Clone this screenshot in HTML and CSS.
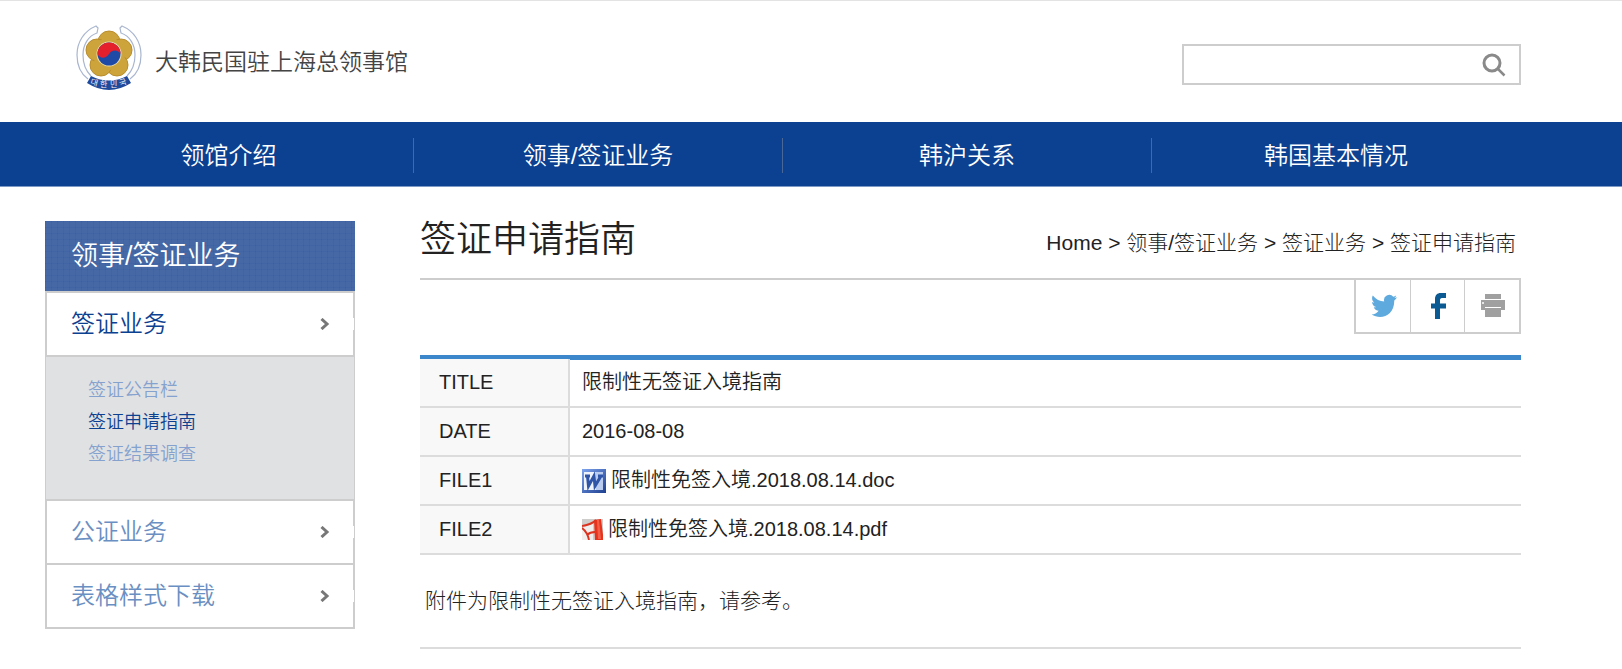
FILE: index.html
```html
<!DOCTYPE html>
<html lang="zh-CN">
<head>
  <meta charset="UTF-8">
  <meta name="viewport" content="width=device-width, initial-scale=1.0">
  <title>签证申请指南</title>
  <link rel="stylesheet" href="styles.css">
</head>
<body>
  <header class="header">
    <a href="#" class="logo">
      <svg class="emblem" viewBox="0 0 66 66" aria-hidden="true">
        <g fill="none" stroke="#a9b6cf" stroke-width="1.2">
          <path d="M12 54C5 49 1 40 1 30 1 17 8 6 20 1l2 2-1 5C12 11 7 20 7 30c0 9 3 16 8 21"/>
          <path d="M54 54c7-5 11-14 11-24C65 17 58 6 46 1l-2 2 1 5c9 3 14 12 14 22 0 9-3 16-8 21"/>
        </g>
        <g fill="#cda43c" stroke="#b98d2c" stroke-width="1">
          <circle cx="33" cy="17" r="11"/>
          <circle cx="45" cy="25" r="11"/>
          <circle cx="41" cy="40" r="11"/>
          <circle cx="25" cy="40" r="11"/>
          <circle cx="21" cy="25" r="11"/>
        </g>
        <circle cx="33" cy="29" r="16" fill="#cda43c"/>
        <circle cx="33" cy="29" r="12.500" fill="#ecdcae"/>
        <circle cx="33" cy="29" r="11.500" fill="#1f4aa5"/>
        <path d="M21.500 29a11.500 11.500 0 0 1 23 0c-2-4-8-5-11.500 0s-9 5-11.500 0z" fill="#e5202c"/>
        <path d="M15 51q18 9 36 0l4 7q-22 14-44 0z" fill="#1f4a9c"/>
        <g class="emblem-text">
          <text x="14" y="59" transform="rotate(16 14 59)">대</text>
          <text x="24" y="62">한</text>
          <text x="34" y="62">민</text>
          <text x="44" y="61" transform="rotate(-16 44 61)">국</text>
        </g>
      </svg>
      <span class="logo-name">大韩民国驻上海总领事馆</span>
    </a>
    <form class="search" role="search">
      <input type="text" class="search-input" aria-label="搜索">
      <button type="submit" class="search-btn" aria-label="搜索">
        <svg width="24" height="24" viewBox="0 0 24 24" fill="none" stroke="#8a8a8a">
          <circle cx="10" cy="10" r="8" stroke-width="3"/>
          <path d="M16 16l6.500 6.500" stroke-width="2.500"/>
        </svg>
      </button>
    </form>
  </header>

  <nav class="nav">
    <ul class="nav-list">
      <li><a href="#">领馆介绍</a></li>
      <li><a href="#">领事/签证业务</a></li>
      <li><a href="#">韩沪关系</a></li>
      <li><a href="#">韩国基本情况</a></li>
    </ul>
  </nav>

  <div class="wrap">
    <aside class="side">
      <h2 class="side-title">领事/签证业务</h2>
      <ul class="side-menu">
        <li>
          <a href="#" class="side-link active">签证业务
            <svg class="arrow" viewBox="0 0 10 12"><path d="M1.500 1l5.500 5-5.500 5"/></svg>
          </a>
          <ul class="side-sub">
            <li><a href="#">签证公告栏</a></li>
            <li><a href="#" class="active">签证申请指南</a></li>
            <li><a href="#">签证结果调查</a></li>
          </ul>
        </li>
        <li>
          <a href="#" class="side-link">公证业务
            <svg class="arrow" viewBox="0 0 10 12"><path d="M1.500 1l5.500 5-5.500 5"/></svg>
          </a>
        </li>
        <li>
          <a href="#" class="side-link">表格样式下载
            <svg class="arrow" viewBox="0 0 10 12"><path d="M1.500 1l5.500 5-5.500 5"/></svg>
          </a>
        </li>
      </ul>
    </aside>

    <main class="content">
      <div class="content-head">
        <h1>签证申请指南</h1>
        <div class="breadcrumb">
          <a href="#" class="home">Home</a> &gt; <a href="#">领事/签证业务</a> &gt; <a href="#">签证业务</a> &gt; <a href="#">签证申请指南</a>
        </div>
      </div>

      <div class="share">
        <button type="button" aria-label="Twitter">
          <svg width="26" height="24" viewBox="0 0 26 24" fill="#5ea9dd">
            <path d="M26 3.300c-.9.4-1.700.7-2.700.8 1-.6 1.500-1.400 1.900-2.500-.9.500-1.900.9-2.900 1.100A5.300 5.300 0 0 0 13.200 7.600C8.800 7.400 4.900 5.300 1.800 1.500c-1.400 2.500-.7 5.400 1.600 7-.8 0-1.600-.2-2.300-.6 0 2.600 1.700 4.600 4.100 5.200-.8.2-1.500.2-2.300.1.600 2 2.500 3.500 4.800 3.600C6 19 3.500 20.500.6 20.600c8.600 5.400 22.600 2.300 22.700-14.100 1.200-.9 2-1.900 2.700-3.200z"/>
          </svg>
        </button>
        <button type="button" aria-label="Facebook">
          <svg width="16" height="26" viewBox="0 0 16 26" fill="#0b5a94">
            <path d="M4 26V15.500H0v-5h4V6c0-4 2.500-6 5.500-6H15v5h-3c-2 0-3 .5-3 2v3.500h6v5H9V26z"/>
          </svg>
        </button>
        <button type="button" aria-label="Print">
          <svg width="26" height="24" viewBox="0 0 26 24" fill="#a0a0a0">
            <path d="M5 0h16v5H5zM1 6h24v10h-4v-3H5v3H1zM5 14h16v9H5z"/>
            <circle cx="3" cy="9" r="1" fill="#fff"/>
          </svg>
        </button>
      </div>

      <table class="info">
        <tbody>
          <tr>
            <th scope="row">TITLE</th>
            <td>限制性无签证入境指南</td>
          </tr>
          <tr>
            <th scope="row">DATE</th>
            <td>2016-08-08</td>
          </tr>
          <tr>
            <th scope="row">FILE1</th>
            <td>
              <a href="#" class="file">
                <svg width="24" height="24" viewBox="0 0 24 24">
                  <defs>
                    <linearGradient id="word" x1="0" y1="0" x2="1" y2="1">
                      <stop offset="0" stop-color="#7fa4ee"/>
                      <stop offset="1" stop-color="#1d3f8f"/>
                    </linearGradient>
                  </defs>
                  <path fill="url(#word)" d="M0 0h24v24H0z"/>
                  <path fill="#eef3fc" d="M2 3h19v18H2z"/>
                  <path fill="#b9cbef" d="M14 3h7v18h-7z"/>
                  <path d="M3 7h5M5.500 7l1 10L12 7l1 10L19 7M16 7h5" fill="none" stroke="#2f55a8" stroke-width="3"/>
                </svg>
                <span>限制性免签入境.2018.08.14.doc</span>
              </a>
            </td>
          </tr>
          <tr>
            <th scope="row">FILE2</th>
            <td>
              <a href="#" class="file">
                <svg width="21" height="21" viewBox="0 0 21 21">
                  <path fill="#cfcdcb" d="M0 0h21v21H0z"/>
                  <path fill="#f1efee" d="M0 9l11-4v16H0z"/>
                  <path fill="#e8321c" d="M12 1l7-1 2 16v5h-8z"/>
                  <path fill="#f2604a" d="M15 1h2l2 19h-3z"/>
                  <path d="M0 7c6-1 10-2 14-6M0 9c4 3 6 7 7 12M5 16c2-2 4-3 8-3" fill="none" stroke="#dc3420" stroke-width="2"/>
                </svg>
                <span>限制性免签入境.2018.08.14.pdf</span>
              </a>
            </td>
          </tr>
        </tbody>
      </table>

      <div class="article">
        <p>附件为限制性无签证入境指南，请参考。</p>
      </div>
    </main>
  </div>
</body>
</html>
```
FILE: styles.css
```css
:root {
  --blue: #0c4191;
  --line: #cdcdcd;
  --table-line: #dcdcdc;
  --text: #222;
}

* {
  box-sizing: border-box;
}

body {
  margin: 0;
  border-top: 1px solid #e3e3e3;
  background: #fff;
  color: var(--text);
  font-family: "Liberation Sans", "Noto Sans CJK SC", sans-serif;
  font-size: 20px;
  font-weight: 350;
}

ul {
  list-style: none;
  margin: 0;
  padding: 0;
}

a {
  color: inherit;
  text-decoration: none;
}

button {
  padding: 0;
  border: none;
  background: none;
  cursor: pointer;
}

svg {
  display: block;
  flex-shrink: 0;
}

/* header */
.header {
  display: flex;
  justify-content: space-between;
  align-items: center;
  height: 121px;
  padding: 0 101px 0 76px;
}

.logo {
  display: flex;
  align-items: center;
  gap: 13px;
  color: #444;
  font-size: 23px;
  line-height: 30px;
}

.emblem {
  width: 66px;
  height: 66px;
  margin-bottom: 8px;
}

.emblem-text {
  fill: #fff;
  font-family: "Noto Sans CJK KR", sans-serif;
  font-size: 8px;
}

.search {
  display: flex;
  align-items: center;
  width: 339px;
  height: 41px;
  margin-top: 6px;
  padding-right: 13px;
  border: 2px solid var(--line);
}

.search-input {
  flex: 1;
  min-width: 0;
  height: 100%;
  padding: 0 10px;
  border: none;
  outline: none;
  background: none;
  font: inherit;
}

/* main nav */
.nav {
  padding: 0 102px 0 44px;
  border-bottom: 1px solid #7d9ac6;
  background: var(--blue);
}

.nav-list {
  display: grid;
  grid-template-columns: repeat(4, 1fr);
  align-items: center;
  height: 64px;
  padding-top: 3px;
}

.nav-list li {
  color: #fff;
  font-size: 24px;
  line-height: 35px;
  text-align: center;
}

.nav-list li + li {
  border-left: 1px solid #4a6797;
}

.nav-list a {
  display: block;
}

.wrap {
  display: flex;
  align-items: flex-start;
  gap: 65px;
  padding: 34px 101px 20px 45px;
}

/* left menu */
.side {
  flex: 0 0 310px;
}

.side-title {
  margin: 0;
  padding-left: 26px;
  background-color: #4669a6;
  background-image:
    linear-gradient(rgba(30, 80, 160, 0.15) 1px, transparent 1px),
    linear-gradient(90deg, rgba(30, 80, 160, 0.15) 1px, transparent 1px);
  background-size: 6px 6px;
  color: #fff;
  font-size: 27px;
  font-weight: inherit;
  line-height: 70px;
}

.side-menu {
  border-bottom: 2px solid var(--line);
}

.side-link {
  position: relative;
  display: flex;
  justify-content: space-between;
  align-items: center;
  height: 64px;
  padding: 0 23px 0 24px;
  border: 2px solid var(--line);
  border-bottom: none;
  color: #6a8fc2;
  font-size: 24px;
  line-height: 32px;
}

/* gap in the right border next to the arrow */
.side-link::after {
  content: "";
  position: absolute;
  right: -1px;
  width: 1px;
  height: 12px;
  background: #fff;
}

.side-link.active,
.side-sub .active {
  color: var(--blue);
}

.arrow {
  width: 10px;
  height: 12px;
  fill: none;
  stroke: #777;
  stroke-width: 3;
}

.side-sub {
  padding: 17px 0 29px 42px;
  border: 1px solid var(--line);
  border-top-width: 2px;
  border-bottom: none;
  background: #e0e1e3;
  color: #85a2cf;
  font-size: 18px;
  line-height: 32px;
}

/* content */
.content {
  flex: 1;
  min-width: 0;
}

.content-head {
  display: flex;
  justify-content: space-between;
  align-items: center;
  height: 59px;
  padding-right: 5px;
  border-bottom: 2px solid var(--line);
}

.content-head h1 {
  margin: 0 0 20px;
  font-size: 36px;
  font-weight: inherit;
  line-height: 40px;
}

.breadcrumb {
  margin-bottom: 14px;
  font-size: 21px;
  font-weight: 300;
  line-height: 30px;
}

.share {
  display: flex;
  width: 167px;
  height: 56px;
  margin: -2px 0 21px auto;
  border: 2px solid var(--line);
  border-top-width: 1px;
}

.share button {
  flex: 1;
  display: flex;
  justify-content: center;
  align-items: center;
  padding-left: 2px;
}

.share button + button {
  border-left: 1px solid var(--line);
}

.info {
  width: 100%;
  border-top: 4px solid #3c86cc;
  border-spacing: 0;
}

.info th,
.info td {
  height: 49px;
  padding: 0 12px 2px;
  border-bottom: 2px solid var(--table-line);
  font-weight: inherit;
  line-height: 24px;
  text-align: left;
}

.info th {
  width: 150px;
  padding-left: 19px;
  border-right: 2px solid var(--table-line);
  background: #f8f8f8;
}

.info tr:first-child td {
  border-top: 1px solid #3c86cc;
}

.file {
  display: flex;
  align-items: center;
  gap: 5px;
}

.file svg {
  margin-top: 2px;
}

.article {
  padding: 32px 5px;
  border-bottom: 2px solid var(--table-line);
  font-size: 21px;
  font-weight: 300;
  line-height: 28px;
}

.article p {
  margin: 0;
}
```
